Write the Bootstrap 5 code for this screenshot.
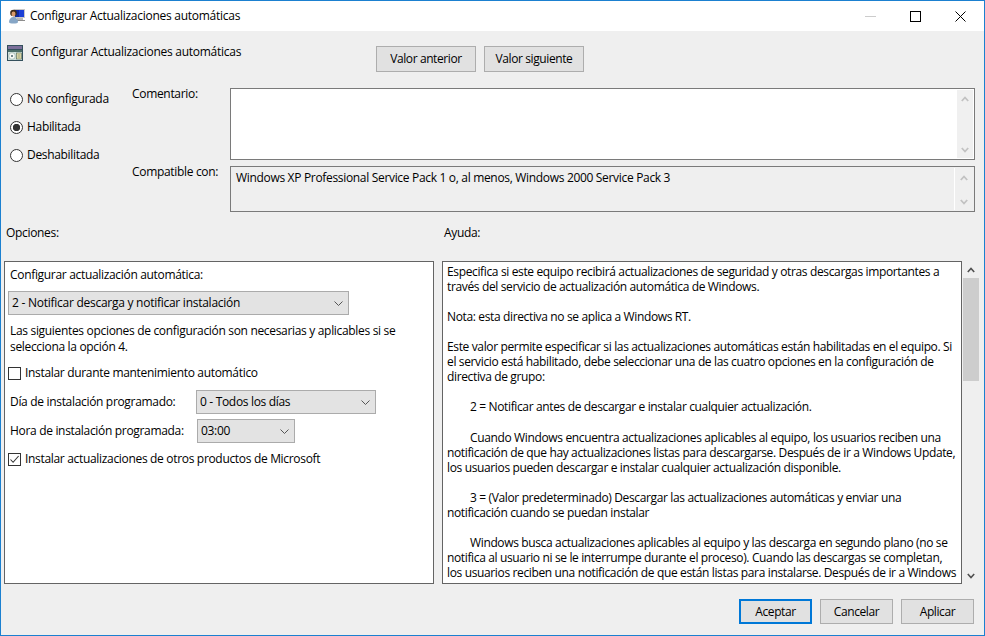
<!DOCTYPE html>
<html lang="es">
<head>
<meta charset="utf-8">
<title>Configurar Actualizaciones automáticas</title>
<link href="https://cdn.jsdelivr.net/npm/bootstrap@5.3.0/dist/css/bootstrap.min.css" rel="stylesheet">
<style>
html,body{margin:0;height:100%;overflow:hidden;background:#efefef}
body{font-family:"Open Sans","Noto Sans",sans-serif;font-size:12px;line-height:16px;color:#000;letter-spacing:-.32px}
.gp-win{width:985px;height:636px;border:1px solid #1b80d0;background:#efefef}
.gp-title{height:30px;background:#fff;padding-left:8px;gap:5px;letter-spacing:-.27px}
.gp-ctl{margin-left:auto;padding-right:18px;gap:34px}
.gp-head{height:26px;margin-top:15px}
.gp-head-ic{margin:-1px 0 0 6px}
.gp-head-tx{margin:-2px 0 0 8px;width:345px;flex:none;letter-spacing:-.27px}
.gp-btn{--bs-btn-padding-y:0;--bs-btn-padding-x:0;--bs-btn-font-size:12px;--bs-btn-line-height:16px;--bs-btn-border-radius:0;--bs-btn-bg:#e1e1e1;--bs-btn-border-color:#adadad;--bs-btn-color:#000;--bs-btn-hover-bg:#e1e1e1;--bs-btn-hover-border-color:#adadad;--bs-btn-font-family:inherit;--bs-btn-border-width:1px;letter-spacing:-.4px}
.gp-btn-nav{width:100px;height:26px}
.gp-btn-ft{width:73px;height:25px}
.gp-btn-def{--bs-btn-border-color:#0078d7;--bs-btn-hover-border-color:#0078d7;--bs-btn-border-width:2px}
.gp-set{margin-top:16px}
.gp-radios{width:131px;padding:4px 0 0 9px;gap:14px;flex:none}
.gp-radios label{height:14px;gap:4px;line-height:14px}
.gp-grid{display:grid;grid-template-columns:98px 745px;row-gap:6px}
.gp-lab{line-height:12px}
.gp-box{border:1px solid #7a7a7a;padding:1px 1px 1px 5px}
.gp-box-w{height:72px;background:#fff}
.gp-box-g{height:46px;padding-right:2px}
.gp-box-g .gp-val{padding-top:2px;flex:1}
.gp-sb{width:16px;flex:none;background:#f0f0f0;padding:6px 0 5px;margin-left:auto}
.gp-box-w .gp-sb{height:68px}
.gp-box-g .gp-sb{height:42px;background:#efefef;border-left:1px solid #fff;width:18px;padding:7px 0 5px 1px}
.gp-secs{display:grid;grid-template-columns:430px 538px;column-gap:8px;padding-left:3px}
.gp-sec-l{margin:13px 0 20px 2px;line-height:16px}
.gp-pan{height:323px;border:1px solid #646464;background:#fff;overflow:hidden}
.gp-opt{padding:5px 3px 0 3px}
.gp-opt .gp-t{padding-left:2px}
.gp-sel{height:24px;padding:0 0 0 3px;font-size:12px;line-height:20px;border:1px solid #ababab;border-radius:0;background-color:#e3e3e3;color:#000;font-family:inherit;letter-spacing:inherit;background-image:url("data:image/svg+xml,%3Csvg xmlns='http://www.w3.org/2000/svg' width='9' height='5'%3E%3Cpath d='M.5.5l4 4 4-4' fill='none' stroke='%23555'/%3E%3C/svg%3E");background-size:9px 5px;background-position:right 5px center}
.gp-sel-a{width:341px;margin-top:8px;letter-spacing:-.26px}
.gp-sel-b{width:180px}
.gp-sel-c{width:98px;margin-left:1px}
.gp-note{margin:8px 0 0}
.gp-chk{gap:4px;height:14px;line-height:14px;margin-top:11px}
.gp-chk-l{margin-top:9px}
.gp-row{margin-top:5px;height:24px}
.gp-row-f{margin-top:10px}
.gp-row .gp-t{width:188px;flex:none}
.gp-in.form-check-input{width:13px;height:13px;margin:0;flex:none;float:none;border:1px solid #333;background-color:#fff;box-shadow:none}
.gp-in.form-check-input[type=radio]:checked{background-image:radial-gradient(circle at center,#333 0,#333 3.4px,transparent 4px);background-size:auto;border-color:#333}
.gp-in.form-check-input[type=checkbox]{border-radius:0}
.gp-in.form-check-input[type=checkbox]:checked{border-color:#333;background-size:11px 11px;background-image:url("data:image/svg+xml,%3Csvg xmlns='http://www.w3.org/2000/svg' viewBox='0 0 11 11'%3E%3Cpath d='M1.5 5.5l2.6 2.8 5.500-6.300' fill='none' stroke='%23333' stroke-width='1.1'/%3E%3C/svg%3E")}
.gp-help{width:520px;flex:none;padding:2px 0 0 4px;line-height:15.05px;white-space:nowrap;letter-spacing:-.36px}
.gp-help p{margin:0 0 15.05px}
.gp-help .gp-ind{text-indent:23px}
.gp-vs{width:16px;flex:none;margin-left:1px;padding:6px 0 5px}
.gp-thumb{width:16px;height:103px;background:#cdcdcd;margin-top:5px}
.gp-foot{margin-top:15px;padding-right:10px;gap:8px}
</style>
</head>
<body>
<div class="gp-win d-flex flex-column">
  <div class="gp-title d-flex align-items-center">
    <svg width="16" height="16" viewBox="0 0 16 16">
      <rect x="5" y="1" width="11" height="9" fill="#c9c9c9"/><rect x="6" y="2" width="9" height="7" fill="#1c3fd6"/><rect x="6" y="2" width="4" height="7" fill="#0f2aa0"/><rect x="8" y="10" width="6" height="2" fill="#b9b9b9"/><rect x="6" y="12" width="10" height="1" fill="#8d8d8d"/>
      <circle cx="4.5" cy="5" r="3.300" fill="#3d2a18"/><ellipse cx="4.500" cy="6" rx="2" ry="2.400" fill="#d89a6a"/><path d="M0 14c0-3 2-5 4.500-5S9 11 9 14c0 1-2 1.500-4.500 1.500S0 15 0 14z" fill="#86a6c6"/>
    </svg>
    <span>Configurar Actualizaciones automáticas</span>
    <div class="gp-ctl d-flex align-items-center">
      <svg width="11" height="11" viewBox="0 0 11 11"><path d="M0 5.500h11" stroke="#cccccc"/></svg>
      <svg width="11" height="11" viewBox="0 0 11 11"><rect x=".5" y=".5" width="10" height="10" fill="none" stroke="#000"/></svg>
      <svg width="11" height="11" viewBox="0 0 11 11"><path d="M.5.5l10 10M10.500.5l-10 10" stroke="#000" fill="none"/></svg>
    </div>
  </div>

  <div class="gp-head d-flex">
    <svg class="gp-head-ic flex-none" width="16" height="16" viewBox="0 0 16 16">
      <rect width="16" height="16" fill="#34505c"/><rect x="1" y="1" width="14" height="3" fill="#7b6f9a"/><rect x="1" y="5" width="14" height="10" fill="#cfe0dc"/><rect x="1" y="5" width="14" height="2" fill="#4a6c66"/>
      <circle cx="5" cy="11" r="3.300" fill="#f6f8f4" stroke="#8aa59c" stroke-width=".6"/><circle cx="5" cy="11" r="1" fill="#47626a"/>
      <rect x="9.500" y="8" width="5" height="6" fill="#f0e7ae" stroke="#5f7060" stroke-width=".7"/><path d="M10.500 10h3M10.500 12h3" stroke="#5f7060" stroke-width=".7"/>
    </svg>
    <span class="gp-head-tx">Configurar Actualizaciones automáticas</span>
    <div class="d-flex gap-2">
      <button type="button" class="btn gp-btn gp-btn-nav">Valor anterior</button>
      <button type="button" class="btn gp-btn gp-btn-nav">Valor siguiente</button>
    </div>
  </div>

  <div class="gp-set d-flex">
    <div class="gp-radios d-flex flex-column">
      <label class="d-flex align-items-center"><input class="form-check-input gp-in" type="radio" name="st">No configurada</label>
      <label class="d-flex align-items-center"><input class="form-check-input gp-in" type="radio" name="st" checked>Habilitada</label>
      <label class="d-flex align-items-center"><input class="form-check-input gp-in" type="radio" name="st">Deshabilitada</label>
    </div>
    <div class="gp-grid">
      <div class="gp-lab">Comentario:</div>
      <div class="gp-box gp-box-w d-flex">
        <div class="gp-sb d-flex flex-column justify-content-between align-items-center">
          <svg width="8" height="6" viewBox="0 0 8 6"><path d="M.8 5L4 1.500 7.200 5" fill="none" stroke="#c2c2c2" stroke-width="1.800"/></svg>
          <svg width="8" height="6" viewBox="0 0 8 6"><path d="M.8 1L4 4.500 7.200 1" fill="none" stroke="#c2c2c2" stroke-width="1.800"/></svg>
        </div>
      </div>
      <div class="gp-lab">Compatible con:</div>
      <div class="gp-box gp-box-g d-flex">
        <div class="gp-val">Windows XP Professional Service Pack 1 o, al menos, Windows 2000 Service Pack 3</div>
        <div class="gp-sb d-flex flex-column justify-content-between align-items-center">
          <svg width="8" height="6" viewBox="0 0 8 6"><path d="M.8 5L4 1.500 7.200 5" fill="none" stroke="#c2c2c2" stroke-width="1.800"/></svg>
          <svg width="8" height="6" viewBox="0 0 8 6"><path d="M.8 1L4 4.500 7.200 1" fill="none" stroke="#c2c2c2" stroke-width="1.800"/></svg>
        </div>
      </div>
    </div>
  </div>

  <div class="gp-secs">
    <div>
      <div class="gp-sec-l">Opciones:</div>
      <div class="gp-pan gp-opt">
        <div class="gp-t">Configurar actualización automática:</div>
        <select class="form-select gp-sel gp-sel-a"><option>2 - Notificar descarga y notificar instalación</option></select>
        <p class="gp-note gp-t">Las siguientes opciones de configuración son necesarias y aplicables si se<br>selecciona la opción 4.</p>
        <label class="gp-chk d-flex align-items-center"><input class="form-check-input gp-in" type="checkbox">Instalar durante mantenimiento automático</label>
        <div class="gp-row gp-row-f d-flex align-items-center">
          <span class="gp-t">Día de instalación programado:</span>
          <select class="form-select gp-sel gp-sel-b"><option>0 - Todos los días</option></select>
        </div>
        <div class="gp-row d-flex align-items-center">
          <span class="gp-t">Hora de instalación programada:</span>
          <select class="form-select gp-sel gp-sel-c"><option>03:00</option></select>
        </div>
        <label class="gp-chk gp-chk-l d-flex align-items-center"><input class="form-check-input gp-in" type="checkbox" checked>Instalar actualizaciones de otros productos de Microsoft</label>
      </div>
    </div>
    <div>
      <div class="gp-sec-l">Ayuda:</div>
      <div class="d-flex">
        <div class="gp-pan gp-help">
          <p>Especifica si este equipo recibirá actualizaciones de seguridad y otras descargas importantes a<br>través del servicio de actualización automática de Windows.</p>
          <p>Nota: esta directiva no se aplica a Windows RT.</p>
          <p>Este valor permite especificar si las actualizaciones automáticas están habilitadas en el equipo. Si<br>el servicio está habilitado, debe seleccionar una de las cuatro opciones en la configuración de<br>directiva de grupo:</p>
          <p class="gp-ind">2 = Notificar antes de descargar e instalar cualquier actualización.</p>
          <p class="gp-ind">Cuando Windows encuentra actualizaciones aplicables al equipo, los usuarios reciben una<br>notificación de que hay actualizaciones listas para descargarse. Después de ir a Windows Update,<br>los usuarios pueden descargar e instalar cualquier actualización disponible.</p>
          <p class="gp-ind">3 = (Valor predeterminado) Descargar las actualizaciones automáticas y enviar una<br>notificación cuando se puedan instalar</p>
          <p class="gp-ind">Windows busca actualizaciones aplicables al equipo y las descarga en segundo plano (no se<br>notifica al usuario ni se le interrumpe durante el proceso). Cuando las descargas se completan,<br>los usuarios reciben una notificación de que están listas para instalarse. Después de ir a Windows</p>
        </div>
        <div class="gp-vs d-flex flex-column align-items-center">
          <svg width="8" height="6" viewBox="0 0 8 6"><path d="M.8 5L4 1.500 7.200 5" fill="none" stroke="#505050" stroke-width="1.600"/></svg>
          <div class="gp-thumb"></div>
          <svg class="mt-auto" width="8" height="6" viewBox="0 0 8 6"><path d="M.8 1L4 4.500 7.200 1" fill="none" stroke="#505050" stroke-width="1.600"/></svg>
        </div>
      </div>
    </div>
  </div>

  <div class="gp-foot d-flex justify-content-end">
    <button type="button" class="btn gp-btn gp-btn-ft gp-btn-def">Aceptar</button>
    <button type="button" class="btn gp-btn gp-btn-ft">Cancelar</button>
    <button type="button" class="btn gp-btn gp-btn-ft">Aplicar</button>
  </div>
</div>
</body>
</html>
